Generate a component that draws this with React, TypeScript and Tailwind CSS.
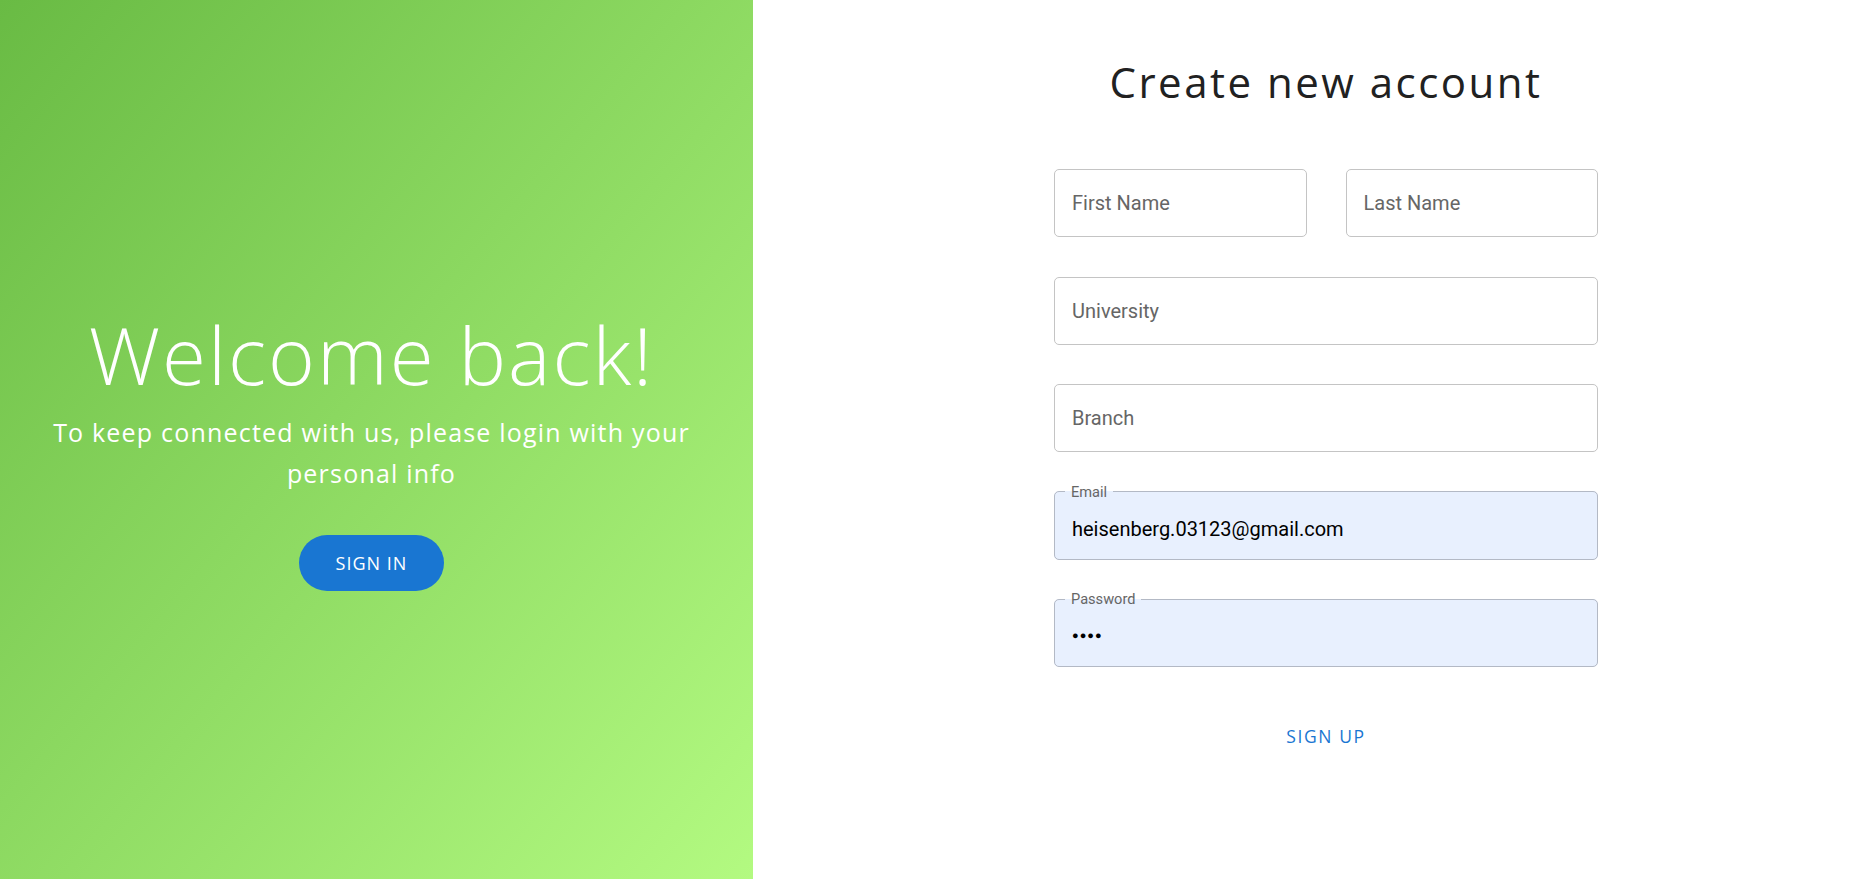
import React from "react";

const heading = { fontFamily: '"Open Sans", "Liberation Sans", sans-serif' };
const roboto = { fontFamily: 'Roboto, "Liberation Sans", sans-serif' };

const EmptyField = ({ label, className = "" }: { label: string; className?: string }) => (
    <div
        className={"h-[68px] rounded-[5px] border border-[#c4c4c4] flex items-center px-[17px] text-[20px] text-[#666666] " + className}
        style={roboto}
    >
        {label}
    </div>
);

const FilledField = ({ label, value }: { label: string; value: React.ReactNode }) => (
    <fieldset
        className="h-[75px] -mt-[7px] rounded-[5px] border border-[#b3b9c5] bg-[#e8f0fe] px-[10px]"
        style={roboto}
    >
        <legend className="px-[6px] text-[14.6px] leading-[14px] text-[#666666]">{label}</legend>
        <div className="h-[60px] flex items-center pl-[7px] text-[20px] text-black">{value}</div>
    </fieldset>
);

export default function App() {
    return (
        <div className="flex h-[879px] w-full bg-white overflow-hidden">
            {/* left */}
            <div className="w-[753px] shrink-0 pr-[10px] bg-[linear-gradient(to_bottom_right,#69bb44,#b3fa81)] flex flex-col items-center justify-center text-white text-center">
                <h1 className="mt-[26px] text-[80px] font-light leading-none tracking-[2px]" style={heading}>
                    Welcome back!
                </h1>
                <p className="mt-[18px] text-[25px] leading-[41px] tracking-[1.2px] w-[660px]" style={heading}>
                    To keep connected with us, please login with your personal info
                </p>
                <button
                    className="mt-[41px] w-[145px] h-[56px] rounded-full bg-[#1976d2] text-[18px] font-medium tracking-[1px] text-white"
                    style={heading}
                >
                    SIGN IN
                </button>
            </div>

            {/* right */}
            <div className="flex-1">
                <div className="ml-[301px] w-[544px] flex flex-col">
                    <h2 className="mt-[54px] text-center text-[42px] leading-[55px] tracking-[2.5px] text-[#212121]" style={heading}>
                        Create new account
                    </h2>
                    <div className="mt-[60px] flex flex-col gap-[39.5px]">
                        <div className="flex gap-[39px]">
                            <EmptyField label="First Name" className="flex-1" />
                            <EmptyField label="Last Name" className="flex-1" />
                        </div>
                        <EmptyField label="University" />
                        <EmptyField label="Branch" />
                        <FilledField label="Email" value="heisenberg.03123@gmail.com" />
                        <FilledField
                            label="Password"
                            value={<span className="text-[11px] tracking-[1px]">●●●●</span>}
                        />
                    </div>
                    <div className="mt-[56px] text-center">
                        <button
                            className="text-[17.5px] font-medium tracking-[1.6px] text-[#1976d2]"
                            style={heading}
                        >
                            SIGN UP
                        </button>
                    </div>
                </div>
            </div>
        </div>
    );
}
